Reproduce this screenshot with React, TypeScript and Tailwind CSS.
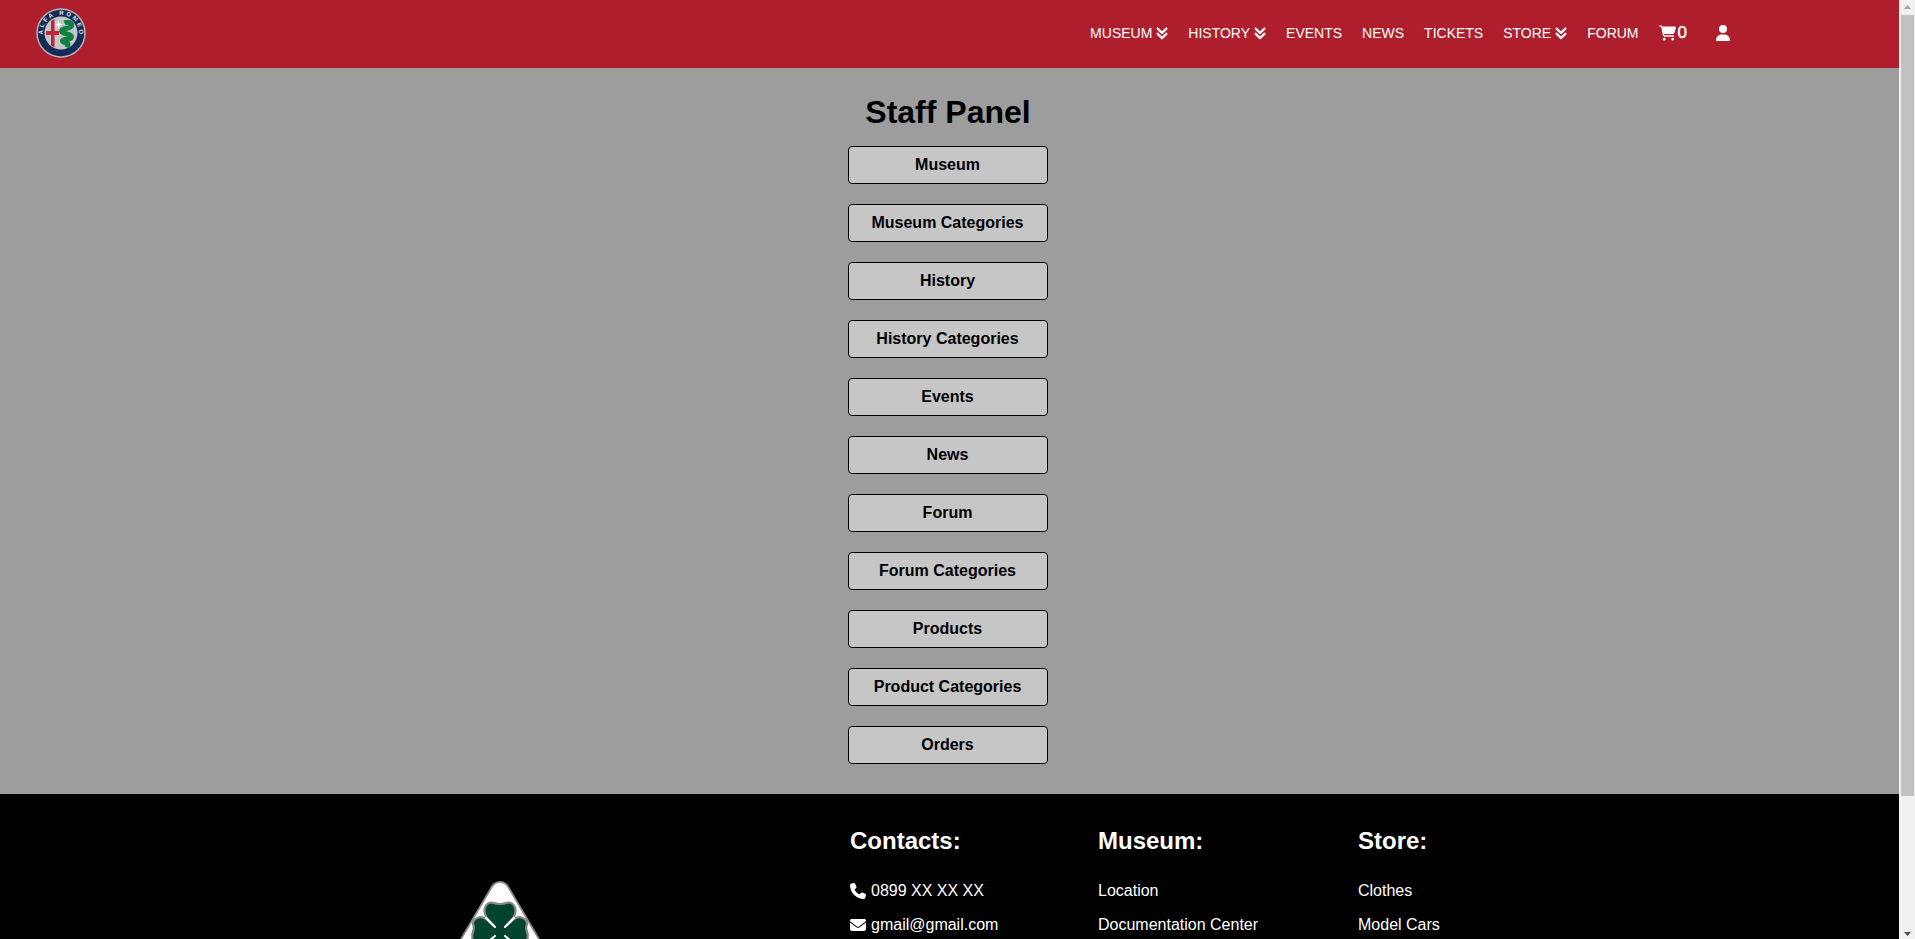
import React from "react";
import { FaAnglesDown, FaCartShopping, FaUser, FaPhone, FaEnvelope } from "react-icons/fa6";

const NAV = [
  { label: "MUSEUM", menu: true },
  { label: "HISTORY", menu: true },
  { label: "EVENTS" },
  { label: "NEWS" },
  { label: "TICKETS" },
  { label: "STORE", menu: true },
  { label: "FORUM" },
];

const SECTIONS = [
  "Museum",
  "Museum Categories",
  "History",
  "History Categories",
  "Events",
  "News",
  "Forum",
  "Forum Categories",
  "Products",
  "Product Categories",
  "Orders",
];

function Badge() {
  return (
    <svg viewBox="0 0 100 100" className="h-[50px] w-[50px]">
      <defs>
        <path id="ring" d="M 14 56 A 36.5 36.5 0 1 1 86 56" />
      </defs>
      <circle cx="50" cy="50" r="49.5" fill="#b0b5be" />
      <circle cx="50" cy="50" r="46.5" fill="#152c56" />
      <circle cx="50" cy="50" r="33" fill="#c4c6c9" />
      <path d="M20 46h10V26l7-4v24h9v8h-9v25l-7-4V54H20z" fill="#c2243a" />
      <path
        d="M57 30C64 26 73 30 71 36C69 42 52 39 51 46C51 53 71 50 71 58C71 65 53 60 53 66C54 71 65 68 64 74L62 79"
        fill="none"
        stroke="#0f8040"
        strokeWidth="10"
      />
      <path d="m45 25 2 6 6 2-6 2-2 6-2-6-6-2 6-2z" fill="#fff" />
      <text fill="#e4e7ec" fontSize="12" fontWeight="700" fontFamily="Liberation Sans, sans-serif">
        <textPath href="#ring" startOffset="3" textLength="120">
          ALFA ROMEO
        </textPath>
      </text>
    </svg>
  );
}

function Clover() {
  return (
    <svg viewBox="0 0 140 120" className="h-[120px] w-[140px]">
      <path
        d="M60.500 8C65-1.500 75-1.500 79.500 8L136 104Q139 114 130 114H10Q1 114 4 104Z"
        fill="#fff"
        stroke="#85878b"
        strokeWidth="1.800"
      />
      <g fill="#04432f" stroke="#85878b" strokeWidth="2.200">
        <path d="M66 47 57 37C52 30 55 21.500 62 21.500Q66 23 70 23Q74 23 78 21.500C85 21.500 88 30 83 37L74 47Z" />
        <path d="M66 47 56 38C51 34 43 37 43 43Q44.500 47 43 51Q41.500 55 43 60C46 67 53 66 58 61L66 54Z" />
        <path d="M74 47 84 38C89 34 97 37 97 43Q95.500 47 97 51Q98.500 55 97 60C94 67 87 66 82 61L74 54Z" />
        <path d="M66 54 57 63C51 70 54 78 62 78Q66 76 70 76Q74 76 78 78C86 78 89 70 83 63L74 54Z" />
      </g>
      <path d="M63 44h14v14H63z" fill="#04432f" />
      <path d="m56 37 9 9M84 37l-9 9M57 62l8-7M83 62l-8-7" stroke="#fff" strokeWidth="2" strokeLinecap="round" />
    </svg>
  );
}

function Column({ title, className, children }: { title: string; className: string; children: React.ReactNode }) {
  return (
    <div className={className}>
      <h2 className="mb-[27px] text-2xl leading-7 font-bold">{title}</h2>
      <div className="flex flex-col gap-4 text-base leading-[18px]">{children}</div>
    </div>
  );
}

export default function App() {
  return (
    <div className="flex h-[939px] w-[1915px] overflow-hidden font-['Liberation_Sans',Arial,sans-serif]">
      <div className="flex w-[1899px] flex-col bg-[#9d9d9d]">
        <header className="flex h-[68px] shrink-0 items-start justify-between bg-[#ae1e2c] pr-[169px] pl-9 text-white">
          <a className="mt-2">
            <Badge />
          </a>
          <nav className="flex h-[66px] items-center gap-5 text-sm">
            {NAV.map((item) => (
              <a key={item.label} className="flex items-center gap-1">
                {item.label}
                {item.menu && (
                  <FaAnglesDown className="h-3.5 w-3 overflow-visible stroke-white" strokeWidth={32} />
                )}
              </a>
            ))}
            <a className="flex items-center text-[17px] leading-5">
              <FaCartShopping className="mr-0.5 h-4 w-[17px]" />
              <span className="[-webkit-text-stroke:0.4px_white]">0</span>
            </a>
            <a className="ml-[9px]">
              <FaUser className="h-4 w-3.5" />
            </a>
          </nav>
        </header>

        <main className="flex h-[726px] shrink-0 flex-col pl-[848px]">
          <h1 className="mt-[26px] mb-4 w-[200px] text-center text-[32px] leading-9 font-bold whitespace-nowrap">
            Staff Panel
          </h1>
          <div className="flex flex-col gap-5">
            {SECTIONS.map((name) => (
              <button
                key={name}
                className="h-[38px] w-[200px] rounded border border-black bg-[#c6c6c6] pr-px text-base leading-[18px] font-bold"
              >
                {name}
              </button>
            ))}
          </div>
        </main>

        <footer className="flex flex-1 overflow-hidden bg-black text-white">
          <div className="w-[850px] pt-[87px] pl-[430px]">
            <Clover />
          </div>
          <Column title="Contacts:" className="w-[248px] pt-[33px]">
            <span className="flex items-center gap-[5px]">
              <FaPhone />
              0899 XX XX XX
            </span>
            <span className="flex items-center gap-[5px]">
              <FaEnvelope />
              gmail@gmail.com
            </span>
          </Column>
          <Column title="Museum:" className="w-[260px] pt-[33px]">
            <span>Location</span>
            <span>Documentation Center</span>
          </Column>
          <Column title="Store:" className="pt-[33px]">
            <span>Clothes</span>
            <span>Model Cars</span>
          </Column>
        </footer>
      </div>

      <div className="flex w-4 flex-col items-center justify-between bg-[#f1f1f1]">
        <svg viewBox="0 0 16 15" className="h-[15px] w-4">
          <path d="M5 9 8.500 5 12 9Z" fill="#a3a3a3" />
        </svg>
        <div className="h-[781px] w-[13px] bg-[#c1c1c1]" />
        <div className="flex-1" />
        <svg viewBox="0 0 16 15" className="h-[15px] w-4">
          <path d="M5 8 8.500 12 12 8Z" fill="#505050" />
        </svg>
      </div>
    </div>
  );
}
